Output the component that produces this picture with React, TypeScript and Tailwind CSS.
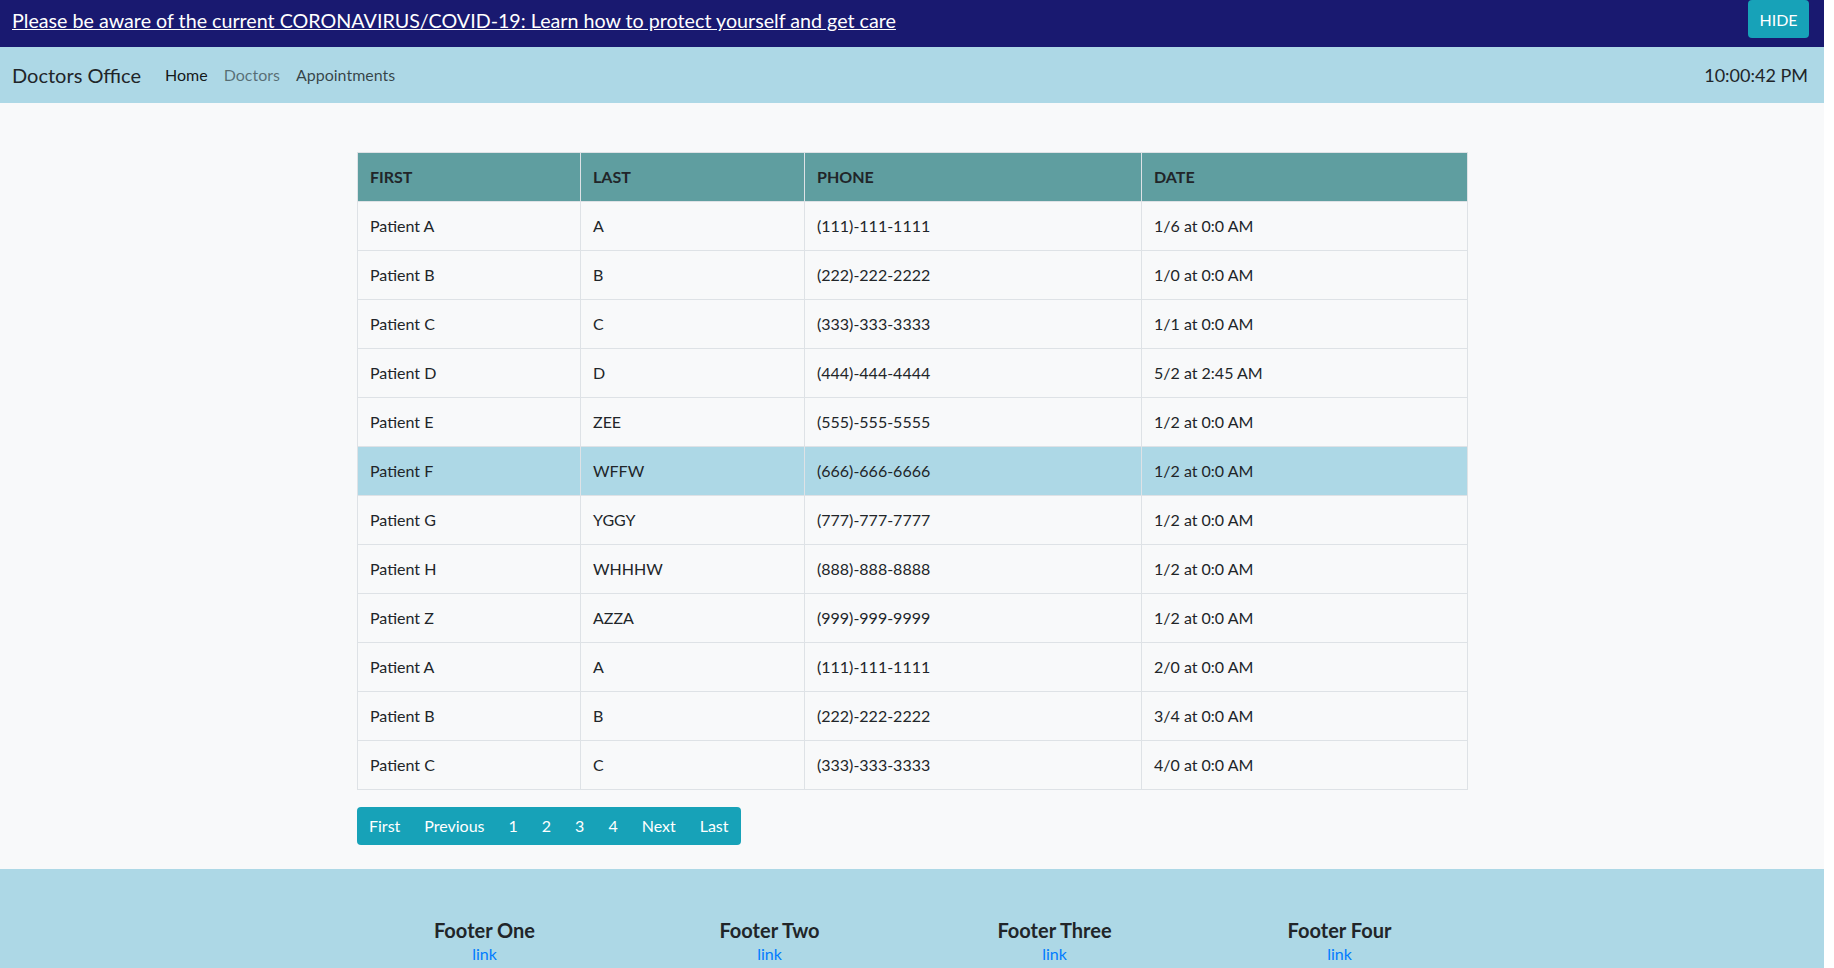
import React from 'react';

const patients = [
  { first: 'Patient A', last: 'A', phone: '(111)-111-1111', date: '1/6 at 0:0 AM' },
  { first: 'Patient B', last: 'B', phone: '(222)-222-2222', date: '1/0 at 0:0 AM' },
  { first: 'Patient C', last: 'C', phone: '(333)-333-3333', date: '1/1 at 0:0 AM' },
  { first: 'Patient D', last: 'D', phone: '(444)-444-4444', date: '5/2 at 2:45 AM' },
  { first: 'Patient E', last: 'ZEE', phone: '(555)-555-5555', date: '1/2 at 0:0 AM' },
  { first: 'Patient F', last: 'WFFW', phone: '(666)-666-6666', date: '1/2 at 0:0 AM', active: true },
  { first: 'Patient G', last: 'YGGY', phone: '(777)-777-7777', date: '1/2 at 0:0 AM' },
  { first: 'Patient H', last: 'WHHHW', phone: '(888)-888-8888', date: '1/2 at 0:0 AM' },
  { first: 'Patient Z', last: 'AZZA', phone: '(999)-999-9999', date: '1/2 at 0:0 AM' },
  { first: 'Patient A', last: 'A', phone: '(111)-111-1111', date: '2/0 at 0:0 AM' },
  { first: 'Patient B', last: 'B', phone: '(222)-222-2222', date: '3/4 at 0:0 AM' },
  { first: 'Patient C', last: 'C', phone: '(333)-333-3333', date: '4/0 at 0:0 AM' },
];

const pages = ['First', 'Previous', '1', '2', '3', '4', 'Next', 'Last'];
const footers = ['Footer One', 'Footer Two', 'Footer Three', 'Footer Four'];

function Banner() {
  return (
    <div className="flex h-[47px] items-start justify-between bg-[#191970] pl-3 pr-[15px]">
      <a className="mt-[9px] text-[19.7px] leading-6 text-white underline">
        Please be aware of the current CORONAVIRUS/COVID-19: Learn how to protect yourself and get care
      </a>
      <button className="h-[38px] w-[61px] rounded-[4px] pt-[2px] text-base text-white bg-[#17a2b8]">HIDE</button>
    </div>
  );
}

function Navbar() {
  return (
    <nav className="flex h-[56px] items-center justify-between bg-[#add8e6] pl-3 pr-4">
      <div className="flex items-center">
        <span className="mr-4 text-[20px] text-[#212529]">Doctors Office</span>
        <a className="px-2 text-base text-black/90">Home</a>
        <a className="px-2 text-base text-black/50">Doctors</a>
        <a className="px-2 text-base text-black/70">Appointments</a>
      </div>
      <span className="text-[18px] text-[#212529]">10:00:42 PM</span>
    </nav>
  );
}

function PatientTable() {
  const cell = 'border border-[#dee2e6] px-3 py-3 text-left align-top';
  return (
    <table className="w-[1110px] table-fixed border-collapse text-base leading-6 text-[#212529]">
      <colgroup>
        <col className="w-[223px]" />
        <col className="w-[224px]" />
        <col className="w-[337px]" />
        <col className="w-[326px]" />
      </colgroup>
      <thead>
        <tr className="bg-[#5f9ea0]">
          {['FIRST', 'LAST', 'PHONE', 'DATE'].map((h) => (
            <th key={h} className={`${cell} font-bold`}>{h}</th>
          ))}
        </tr>
      </thead>
      <tbody>
        {patients.map((p, i) => (
          <tr key={i} className={p.active ? 'bg-[#add8e6]' : 'bg-[#f8f9fa]'}>
            <td className={cell}>{p.first}</td>
            <td className={cell}>{p.last}</td>
            <td className={cell}>{p.phone}</td>
            <td className={cell}>{p.date}</td>
          </tr>
        ))}
      </tbody>
    </table>
  );
}

export default function App() {
  return (
    <div className="flex min-h-[968px] bg-white" style={{ fontFamily: 'Lato, "Open Sans", sans-serif' }}>
      <div className="flex w-[1824px] flex-col">
        <Banner />
        <Navbar />
        <main className="bg-[#f8f9fa] pb-6 pt-[49px]">
          <div className="mx-auto w-[1110px]">
            <PatientTable />
            <div className="mt-[17px] flex w-max rounded-[4px] bg-[#17a2b8]">
              {pages.map((p) => (
                <a key={p} className="px-3 py-[7px] text-base leading-6 text-white">{p}</a>
              ))}
            </div>
          </div>
        </main>
        <footer className="flex-1 bg-[#add8e6] pb-6 pt-[49px]">
          <div className="mx-auto grid w-[1140px] grid-cols-4">
            {footers.map((f) => (
              <div key={f} className="flex flex-col items-center">
                <h5 className="text-[20px] font-bold leading-6 text-[#212529]">{f}</h5>
                <a className="text-base leading-6 text-[#007bff]">link</a>
              </div>
            ))}
          </div>
        </footer>
      </div>
    </div>
  );
}
